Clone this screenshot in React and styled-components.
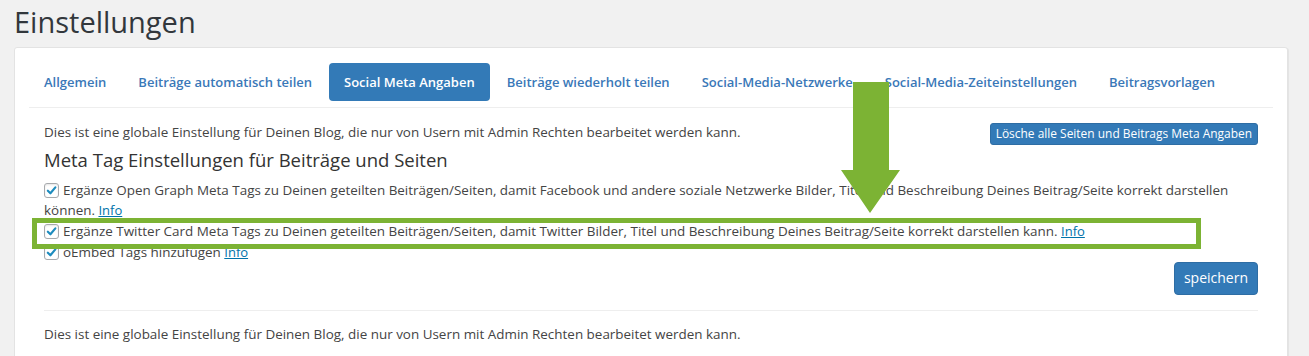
import React from 'react';
import styled, { createGlobalStyle } from 'styled-components';

const GlobalStyle = createGlobalStyle`
  html, body {
    margin: 0;
    padding: 0;
    background: #f1f1f1;
    font-family: "Open Sans", "Noto Sans", sans-serif;
    color: #444;
  }
`;

const Wrap = styled.div`
  padding: 0 21px 0 14px;
`;

const Title = styled.h1`
  margin: 0;
  padding: 4px 0 7px;
  font-size: 29px;
  font-weight: 400;
  line-height: 36px;
  color: #32373c;
`;

const Panel = styled.div`
  position: relative;
  background: #fff;
  border: 1px solid #e3e3e3;
  border-radius: 3px;
  box-shadow: 1px 1px 1px rgba(0, 0, 0, 0.06);
  padding: 15px 14px 0;
  height: 400px;
`;

const Tabs = styled.ul`
  display: flex;
  list-style: none;
  margin: 0;
  padding: 0 0 6px;
  border-bottom: 1px solid #eee;
`;

const Tab = styled.li`
  margin-right: 2px;
  padding: 10px 15px;
  font-size: 13px;
  line-height: 18px;
  font-weight: 600;
  border-radius: 4px;
  color: ${p => (p.active ? '#fff' : '#3a78b8')};
  background: ${p => (p.active ? '#337ab7' : 'transparent')};
  white-space: nowrap;
`;

const Content = styled.div`
  padding: 14px 15px 0;
  font-size: 13.45px;
  line-height: 20px;
`;

const TopRow = styled.div`
  display: flex;
  justify-content: space-between;
  align-items: flex-start;
  height: 24px;
`;

const Button = styled.button`
  font-family: inherit;
  color: #fff;
  background: #337ab7;
  border: 1px solid #2e6da4;
  border-radius: ${p => (p.big ? '4px' : '3px')};
  font-size: ${p => (p.big ? '14px' : '11.95px')};
  line-height: ${p => (p.big ? '20px' : '18px')};
  padding: ${p => (p.big ? '5px 9px 6px' : '1px 5px')};
  margin-top: ${p => (p.big ? '0' : '1px')};
  cursor: pointer;
`;

const Heading = styled.h2`
  margin: 2px 0 8px;
  font-size: 18.5px;
  line-height: 24px;
  font-weight: 500;
  color: #333;
`;

const Option = styled.div`
  margin-bottom: 1px;
`;

const Box = styled.span`
  display: inline-block;
  vertical-align: -3px;
  width: 13px;
  height: 13px;
  margin-right: 4px;
  border: 1px solid #a7aaad;
  border-radius: 3px;
  background: #fff;
  box-shadow: inset 0 1px 2px rgba(0, 0, 0, 0.1);
  position: relative;
  svg {
    position: absolute;
    left: 1px;
    top: 1px;
  }
`;

const Info = styled.a`
  color: #0073aa;
  text-decoration: underline;
  font-size: 13px;
`;

const ButtonRow = styled.div`
  display: flex;
  justify-content: flex-end;
  margin-top: -1px;
`;

const Divider = styled.hr`
  border: 0;
  border-top: 1px solid #eee;
  margin: 15px 0 13px;
`;

const Highlight = styled.div`
  position: absolute;
  left: 17px;
  top: 170px;
  width: 1159px;
  height: 21px;
  border: 5px solid #7cb334;
  pointer-events: none;
`;

const Arrow = styled.svg`
  position: absolute;
  left: 826px;
  top: 34px;
`;

const Check = () => (
  <Box>
    <svg width="11" height="11" viewBox="0 0 12 12">
      <path d="M2 6.2 L4.8 9 L10.2 2.6" fill="none" stroke="#1e8cbe" strokeWidth="2.4" strokeLinecap="round" strokeLinejoin="round" />
    </svg>
  </Box>
);

const tabs = [
  'Allgemein',
  'Beiträge automatisch teilen',
  'Social Meta Angaben',
  'Beiträge wiederholt teilen',
  'Social-Media-Netzwerke',
  'Social-Media-Zeiteinstellungen',
  'Beitragsvorlagen',
];

const notice = 'Dies ist eine globale Einstellung für Deinen Blog, die nur von Usern mit Admin Rechten bearbeitet werden kann.';

const App = () => (
  <>
    <GlobalStyle />
    <Wrap>
      <Title>Einstellungen</Title>
      <Panel>
        <Tabs>
          {tabs.map(t => (
            <Tab key={t} active={t === 'Social Meta Angaben'}>{t}</Tab>
          ))}
        </Tabs>
        <Content>
          <TopRow>
            <span>{notice}</span>
            <Button>Lösche alle Seiten und Beitrags Meta Angaben</Button>
          </TopRow>
          <Heading>Meta Tag Einstellungen für Beiträge und Seiten</Heading>
          <Option>
            <Check />
            Ergänze Open Graph Meta Tags zu Deinen geteilten Beiträgen/Seiten, damit Facebook und andere soziale Netzwerke Bilder, Titel und Beschreibung Deines Beitrag/Seite korrekt darstellen können. <Info>Info</Info>
          </Option>
          <Option>
            <Check />
            Ergänze Twitter Card Meta Tags zu Deinen geteilten Beiträgen/Seiten, damit Twitter Bilder, Titel und Beschreibung Deines Beitrag/Seite korrekt darstellen kann. <Info>Info</Info>
          </Option>
          <Option>
            <Check />
            oEmbed Tags hinzufügen <Info>Info</Info>
          </Option>
          <ButtonRow>
            <Button big>speichern</Button>
          </ButtonRow>
          <Divider />
          <div>{notice}</div>
        </Content>
        <Highlight />
        <Arrow width="60" height="132" viewBox="0 0 60 132">
          <path d="M27 0 H63 V88 H74 L44 131 L15 88 H27 Z" transform="translate(-15 0)" fill="#7cb334" />
        </Arrow>
      </Panel>
    </Wrap>
  </>
);

export default App;
